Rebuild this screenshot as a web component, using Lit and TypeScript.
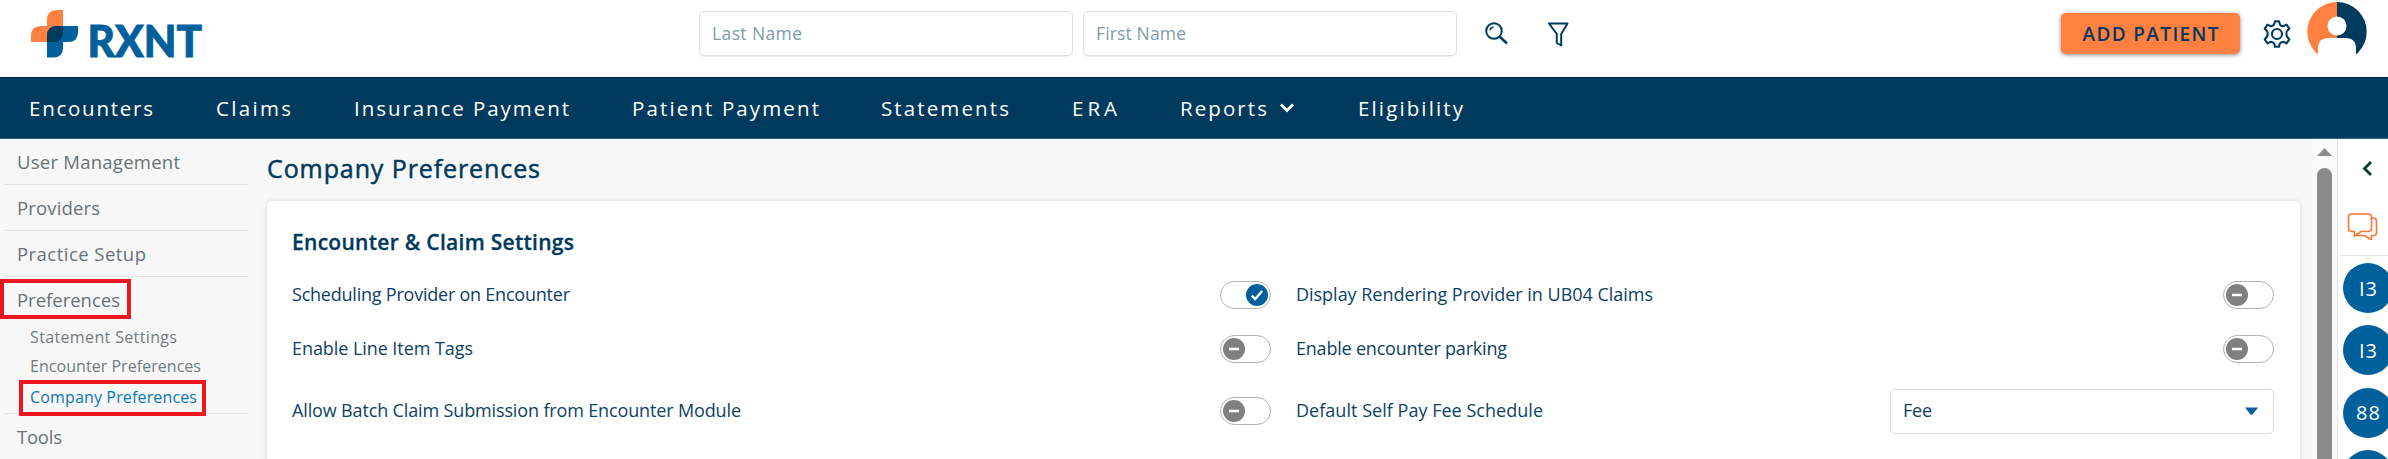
import { LitElement, html, css, svg } from "lit";
import { customElement, property } from "lit/decorators.js";

@customElement("pref-toggle")
class PrefToggle extends LitElement {
  @property({ type: Boolean }) on = false;
  static styles = css`
    :host { display: block; width: 51px; height: 28px; flex: none; }
    .track { box-sizing: border-box; width: 51px; height: 28px; border: 1.5px solid #b4b4b4; border-radius: 14px; background: #fff; display: flex; align-items: center; padding: 0 2px; }
    .track.on { justify-content: flex-end; }
    svg { display: block; }
  `;
  render() {
    return html`<div class="track ${this.on ? "on" : ""}">
      <svg width="22" height="22" viewBox="0 0 22 22">
        <circle cx="11" cy="11" r="11" fill=${this.on ? "#00609c" : "#808080"} />
        ${this.on
          ? svg`<path d="M5.800 11.600l3.400 3.400 7-8" fill="none" stroke="#fff" stroke-width="2.300"/>`
          : svg`<path d="M6 11h10" stroke="#fff" stroke-width="2.500"/>`}
      </svg></div>`;
  }
}

@customElement("app-root")
class AppRoot extends LitElement {
  static styles = css`
    :host { display: block; width: 2388px; height: 459px; overflow: hidden; background: #f7f7f7; color: #003a5c; font-family: "Open Sans", "Noto Sans", sans-serif; }
    * { box-sizing: border-box; }
    svg { display: block; flex: none; }
    .t { display: block; white-space: nowrap; }
    .top { height: 77px; background: #fff; display: flex; align-items: flex-start; padding-left: 31px; }
    .logo { margin-top: 10px; width: 172px; overflow: visible; }
    .logo text { font-family: Lato, sans-serif; font-weight: 900; font-size: 43px; }
    .search { margin: 11px 0 0 496px; display: flex; gap: 10px; }
    .field { width: 374px; height: 45px; border: 1px solid #dedede; border-radius: 5px; box-shadow: 0 1px 1px #eee; padding: 0 0 2px 12px; display: flex; align-items: center; font-size: 17.5px; color: #7e9cae; }
    .glass { margin: 22px 0 0 28px; }
    .funnel { margin: 21px 0 0 39px; }
    .add { margin: 13px 0 0 491px; width: 179px; height: 41px; border-radius: 5px; background: #ff8040; box-shadow: 0 1px 4px #0007; display: flex; align-items: center; justify-content: center; font-weight: 600; font-size: 19px; }
    .gear { margin: 20px 0 0 23px; }
    .avatar { margin: 1px 0 0 16px; }
    .nav { height: 62px; background: #003a5c; border-top: 1px solid #002a48; border-bottom: 1px solid #326580; color: #fff; display: flex; align-items: center; padding: 0 0 1px 29px; font-size: 20.5px; }
    .nav svg { margin-left: 12px; }
    .item { display: flex; align-items: center; }
    .body { height: 320px; display: flex; }
    .side { width: 267px; padding-left: 5px; }
    .row { width: 243px; height: 46px; padding: 0 0 1px 12px; border-bottom: 1px solid #e2e2e2; display: flex; align-items: center; font-size: 18.5px; color: #68727a; }
    .group { width: 243px; height: 135px; border-bottom: 1px solid #e2e2e2; }
    .pref { margin: 2px 0 0 -5px; width: 131px; height: 40px; border: 4px solid #ed1621; padding-left: 13px; display: flex; align-items: center; font-size: 18.5px; color: #68727a; }
    .sub { height: 29.5px; padding-left: 25px; display: flex; align-items: center; font-size: 16px; color: #737b82; }
    .subs { padding-top: 3px; }
    .chosen { margin: -1px 0 0 14px; width: 187px; height: 36px; border: 4px solid #ed1621; padding: 0 0 2px 7px; display: flex; align-items: center; font-size: 16px; color: #0b75b7; }
    .main { width: 2045px; }
    .h1 { height: 62px; padding-bottom: 4px; display: flex; align-items: center; font-size: 25px; -webkit-text-stroke: 0.5px #003a5c; }
    .card { width: 2033px; height: 300px; border-radius: 5px; background: #fff; box-shadow: 0 0 5px #0002; padding: 18px 26px 0 25px; }
    .h2 { height: 45px; display: flex; align-items: center; font-size: 21px; font-weight: 600; -webkit-text-stroke: 0.3px #003a5c; }
    .grid { display: grid; grid-template-columns: 979px 978px; column-gap: 25px; grid-template-rows: 61px 48px 76px; }
    .cell { display: flex; align-items: center; justify-content: space-between; font-size: 18px; color: #0d4264; }
    .cell .t { position: relative; top: -1px; }
    .select { width: 384px; height: 45px; border: 1px solid #dcdcdc; border-radius: 5px; display: flex; align-items: center; justify-content: space-between; padding: 0 15px 0 12px; }
    .scroll { width: 25px; background: #fafafa; display: flex; flex-direction: column; align-items: center; padding-top: 9px; }
    .thumb { margin-top: 12px; width: 15px; height: 320px; border-radius: 8px; background: #8b8b8b; flex: none; }
    .rail { width: 51px; background: #fff; border-left: 1px solid #e2e2e2; display: flex; flex-direction: column; overflow: hidden; }
    .arrow { margin: 22px 0 0 24px; }
    .chat { margin: 36px 0 0 9px; }
    .line { margin: 15px 0 0 2px; height: 1px; background: #e2e2e2; flex: none; }
    .dots { margin: 7px 0 0 5px; display: flex; flex-direction: column; gap: 12.3px; }
    .dot { width: 50px; height: 50px; flex: none; border-radius: 50%; background: #00609c; color: #fff; display: flex; align-items: center; justify-content: center; font-size: 20px; }
  `;

  /* A label set to a known width. */
  private fit(text: string, width: number) {
    return html`<span class="t" data-w=${width}>${text}</span>`;
  }

  async firstUpdated() {
    await document.fonts.ready;
    this.renderRoot.querySelectorAll<HTMLElement>(".t").forEach((el) => {
      const target = Number(el.dataset.w);
      const n = (el.textContent ?? "").length;
      const spacing = (target - el.getBoundingClientRect().width) / Math.max(1, n - 1);
      el.style.letterSpacing = `${spacing}px`;
      el.style.width = `${target}px`;
    });
  }

  render() {
    const nav: [string, number, number][] = [
      ["Encounters", 124, 63], ["Claims", 75, 63], ["Insurance Payment", 215, 63], ["Patient Payment", 187, 62],
      ["Statements", 128, 63], ["ERA", 45, 63], ["Reports", 87, 63], ["Eligibility", 105, 0]];
    return html`
      <div class="top">
        <svg class="logo" height="54" viewBox="0 0 172 54">
          <path d="M16 16V10Q16 0 26 0h6v16z M16 16h16v16H0v-6Q0 16 10 16z" fill="#ff8040"/>
          <path d="M26 16h21v6q0 10-10 10H32v6q0 9.500-10 9.500h-6V26q0-10 10-10z" fill="#00609c"/>
          <path d="M26 16h6v6q0 10-10 10h-6v-6q0-10 10-10z" fill="#003a5c"/>
          <text x="56.500" y="46.500" fill="#00609c" stroke="#00609c" stroke-width="0.900" textLength="114.500" lengthAdjust="spacingAndGlyphs">RXNT</text>
        </svg>
        <div class="search">
          <div class="field">${this.fit("Last Name", 90)}</div>
          <div class="field">${this.fit("First Name", 90)}</div>
        </div>
        <svg class="glass" width="24" height="24" viewBox="0 0 24 24" fill="none" stroke="#003a5c"><circle cx="9" cy="9" r="7.800" stroke-width="2"/><path d="M14.500 14.500L22 21.500" stroke-width="2.500"/><path d="M5 8.500Q5.500 5.500 8.500 5" stroke-width="1.500"/></svg>
        <svg class="funnel" width="22" height="26" viewBox="0 0 22 26" fill="none" stroke="#003a5c" stroke-width="2" stroke-linejoin="round"><path d="M1 2.500h18.500l-6.300 10.500V24.500l-4.400-2.500v-9z"/></svg>
        <div class="add">${this.fit("ADD PATIENT", 136)}</div>
        <svg class="gear" width="28" height="28" viewBox="0 0 28 28" fill="none" stroke="#003a5c" stroke-width="2.100" stroke-linejoin="round"><path d="M12 1.200h4q.500 4.300 3 4.900 1.800.400 4.500-1.600l2.800 4.200q-3 2.200-3 5.300t3 5.300l-2.800 4.200q-2.700-2-4.500-1.600-2.500.600-3 4.900h-4q-.500-4.300-3-4.900-1.800-.400-4.500 1.600l-2.800-4.200q3-2.200 3-5.300t-3-5.300l2.800-4.200q2.700 2 4.500 1.600 2.500-.600 3-4.900z"/><circle cx="14" cy="14" r="5"/></svg>
        <svg class="avatar" width="60" height="61" viewBox="0 0 60 61"><path d="M30 1A29.700 29.700 0 0 0 30 60.400z" fill="#ff8040"/><path d="M30 1A29.700 29.700 0 0 1 30 60.400z" fill="#003a5c"/><circle cx="30" cy="25" r="9.500" fill="#fff"/><path d="M11 61V47.500q0-10.500 10.500-10.500h17q10.500 0 10.500 10.500v13.500z" fill="#fff"/></svg>
      </div>
      <div class="nav">
        ${nav.map(([n, w, gap]) => html`<div class="item" style="margin-right:${gap}px">${this.fit(n, w)}${n === "Reports"
          ? html`<svg width="16" height="10" viewBox="0 0 16 10"><path d="M2 1.500l6 6 6-6" fill="none" stroke="#fff" stroke-width="2.800"/></svg>` : ""}</div>`)}
      </div>
      <div class="body">
        <div class="side">
          <div class="row">${this.fit("User Management", 163)}</div>
          <div class="row">${this.fit("Providers", 83)}</div>
          <div class="row">${this.fit("Practice Setup", 129)}</div>
          <div class="group">
            <div class="pref">${this.fit("Preferences", 103)}</div>
            <div class="subs">
            <div class="sub"><div>${this.fit("Statement Settings", 147)}</div></div>
            <div class="sub"><div>${this.fit("Encounter Preferences", 171)}</div></div>
            <div class="chosen">${this.fit("Company Preferences", 167)}</div>
            </div>
          </div>
          <div class="row">${this.fit("Tools", 45)}</div>
        </div>
        <div class="main">
          <div class="h1">${this.fit("Company Preferences", 273)}</div>
          <div class="card">
            <div class="h2">${this.fit("Encounter & Claim Settings", 282)}</div>
            <div class="grid">
              <div class="cell">${this.fit("Scheduling Provider on Encounter", 278)}<pref-toggle on></pref-toggle></div>
              <div class="cell">${this.fit("Display Rendering Provider in UB04 Claims", 357)}<pref-toggle></pref-toggle></div>
              <div class="cell">${this.fit("Enable Line Item Tags", 181)}<pref-toggle></pref-toggle></div>
              <div class="cell">${this.fit("Enable encounter parking", 211)}<pref-toggle></pref-toggle></div>
              <div class="cell">${this.fit("Allow Batch Claim Submission from Encounter Module", 449)}<pref-toggle></pref-toggle></div>
              <div class="cell">${this.fit("Default Self Pay Fee Schedule", 247)}
                <div class="select">${this.fit("Fee", 29)}<svg width="13" height="8" viewBox="0 0 13 8"><path d="M0 .500h13L7.500 7.500h-2z" fill="#00609c"/></svg></div></div>
            </div>
          </div>
        </div>
        <div class="scroll"><svg width="15" height="8" viewBox="0 0 15 8"><path d="M0 8L7.500 0 15 8z" fill="#8b8b8b"/></svg><div class="thumb"></div></div>
        <div class="rail">
          <svg class="arrow" width="11" height="15" viewBox="0 0 11 15"><path d="M9 1L2.500 7.500 9 14" fill="none" stroke="#003a2c" stroke-width="2.800"/></svg>
          <svg class="chat" width="32" height="28" viewBox="0 0 32 28" fill="none" stroke="#ff7433" stroke-width="1.600" stroke-linejoin="round"><path d="M4.500 2H21.500q3 0 3 3V16.500q0 3-3 3H14L7.500 24V19.500H4.500q-3 0-3-3V5q0-3 3-3z"/><path d="M24.500 6h2q3 0 3 3v11.500q0 3-3 3H24.500v4.500l-7-4.500h-9"/></svg>
          <div class="line"></div>
          <div class="dots">
            <div class="dot">${this.fit("I3", 18)}</div><div class="dot">${this.fit("I3", 18)}</div><div class="dot">${this.fit("88", 24)}</div><div class="dot"></div>
          </div>
        </div>
      </div>`;
  }
}
